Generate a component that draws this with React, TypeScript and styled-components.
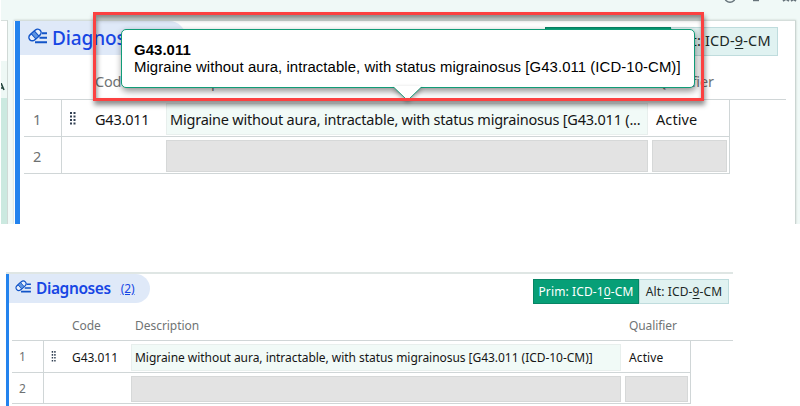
import React from "react";
import styled, { createGlobalStyle } from "styled-components";

const Global = createGlobalStyle`
  * { box-sizing: border-box; }
  body { margin: 0; background: #fff; font-family: "Noto Sans", "Open Sans", sans-serif; }
`;

const Page = styled.main`
  position: relative;
  width: 800px;
  height: 406px;
  overflow: hidden;
  background: #fff;
`;

const Workspace = styled.section`
  height: 224px;
  margin-left: 1px;
  padding-top: 20px;
  display: flex;
  background: #f0f9f7;
`;

const SideRail = styled.div`
  width: 7px;
  margin-right: 6px;
  border-right: 1px solid #d0d9d6;
  border-top: 1px solid #d6dfdc;
  background: linear-gradient(#fff 0 40px, #eef8f5 40px 77px, #cbe9e0 77px);
  overflow: hidden;
`;

const RailMark = styled.svg`
  display: block;
  width: 4px;
  height: 8px;
  margin-top: 62px;
`;

const Panel = styled.section<{ $small?: boolean }>`
  width: ${(p) => (p.$small ? 727 : 782)}px;
  height: ${(p) => (p.$small ? 134 : 204)}px;
  margin: ${(p) => (p.$small ? "48px 0 0 6px" : "0")};
  background: #fff;
  border-top: ${(p) => (p.$small ? "2px solid #dfe6e4" : "1px solid #d5dedb")};
  border-right: ${(p) => (p.$small ? "0" : "1px solid #cbd5d2")};
  box-shadow: ${(p) => (p.$small ? "none" : "0 0 2px #c3cdca")};
  clip-path: inset(-3px -3px 0 -3px);
  display: flex;
`;

const Stripe = styled.div<{ $small?: boolean }>`
  width: ${(p) => (p.$small ? 3 : 5)}px;
  margin-left: ${(p) => (p.$small ? 0 : 1)}px;
  flex: none;
  background: #2383ee;
`;

const Body = styled.div`
  flex: 1;
  min-width: 0;
`;

const Header = styled.header<{ $small?: boolean }>`
  height: ${(p) => (p.$small ? 37 : 41)}px;
  display: flex;
  justify-content: space-between;
  align-items: flex-start;
  padding-right: ${(p) => (p.$small ? 4 : 17)}px;
`;

const Title = styled.div<{ $small?: boolean }>`
  width: ${(p) => (p.$small ? 141 : 166)}px;
  height: ${(p) => (p.$small ? 29 : 34)}px;
  padding-left: ${(p) => (p.$small ? 6 : 8)}px;
  border-radius: ${(p) => (p.$small ? "0 15px 15px 0" : "0 18px 18px 0")};
  background: #dfe9f8;
  color: #1746e4;
  display: flex;
  align-items: center;
`;

const PillIcon = styled.svg<{ $small?: boolean }>`
  width: ${(p) => (p.$small ? 17 : 20)}px;
  height: ${(p) => (p.$small ? 14 : 17)}px;
  flex: none;
  margin: ${(p) => (p.$small ? "-4px 4px 0 0" : "-3px 4px 0 0")};
`;

const Text = styled.span<{ $size: number; $track?: number; $weight?: number }>`
  font-size: ${(p) => p.$size}px;
  letter-spacing: ${(p) => p.$track ?? 0}px;
  font-weight: ${(p) => p.$weight ?? 400};
  line-height: 1.3;
  white-space: nowrap;
`;

const Count = styled.span`
  margin-left: 10px;
  font-size: 12px;
  letter-spacing: -0.1px;
  text-decoration: underline;
`;

const Switcher = styled.div<{ $small?: boolean }>`
  display: flex;
  height: ${(p) => (p.$small ? 25 : 29)}px;
  margin-top: ${(p) => (p.$small ? 5 : 6)}px;
`;

const Choice = styled.button<{ $on?: boolean; $w: number }>`
  width: ${(p) => p.$w}px;
  height: 100%;
  padding: 0 0 2px;
  font-family: inherit;
  border: 1px solid ${(p) => (p.$on ? "#078565" : "#bfdcdd")};
  background: ${(p) => (p.$on ? "#079f77" : "#e0f2f1")};
  color: ${(p) => (p.$on ? "#fff" : "#1c2826")};
  u { text-underline-offset: 2px; }
`;

const Line = styled.div<{ $small?: boolean; $kind?: "head" }>`
  display: grid;
  grid-template-columns: ${(p) => (p.$small ? "31px 88px 494px 65px" : "37px 105px 486px 77px")};
  margin-left: ${(p) => (p.$small ? 3 : 4)}px;
  width: ${(p) => (p.$kind ? (p.$small ? 721 : 762) : p.$small ? 679 : 706)}px;
  height: ${(p) => (p.$kind ? (p.$small ? 30 : 38) : p.$small ? 31.5 : 37)}px;
  border-bottom: 1px solid #d0d6d7;
  border-right: ${(p) => (p.$kind ? 0 : 1)}px solid #d0d6d7;
  align-items: stretch;
  color: ${(p) => (p.$kind ? "#707475" : "#151515")};
`;

const Label = styled.div<{ $pad: number }>`
  padding-top: 1px;
  padding-left: ${(p) => p.$pad}px;
  display: flex;
  align-items: center;
`;

const Num = styled.div<{ $small?: boolean }>`
  display: flex;
  align-items: center;
  padding: 2px 0 0 ${(p) => (p.$small ? 7 : 9)}px;
  color: #6e7172;
`;

const CodeCell = styled.div`
  display: flex;
  align-items: center;
  padding-top: 3px;
  border-left: 1px solid #d0d6d7;
`;

const Grip = styled.svg<{ $small?: boolean }>`
  width: ${(p) => (p.$small ? 5 : 7)}px;
  height: ${(p) => (p.$small ? 11 : 13)}px;
  margin: ${(p) => (p.$small ? "-2px 16px 0 7px" : "-3px 19px 0 7px")};
  flex: none;
`;

const Field = styled.div<{ $tone?: "mint" | "gray"; $pad: number; $end?: boolean }>`
  display: flex;
  align-items: center;
  margin: 3px ${(p) => (p.$end ? 2 : 4)}px 1px 0;
  padding: 1px 0 0 ${(p) => p.$pad}px;
  border: 1px solid ${(p) => (p.$tone === "gray" ? "#d6d8d8" : p.$tone ? "#e8efed" : "transparent")};
  background: ${(p) => (p.$tone === "gray" ? "#e3e3e3" : p.$tone ? "#f1faf7" : "transparent")};
`;

const Toolbar = styled.svg`
  position: absolute;
  left: 720px;
  top: 0;
`;

const Callout = styled.div`
  position: absolute;
  left: 93px;
  top: 12px;
  width: 611px;
  height: 89px;
  border: 3px solid #fb4141;
  box-shadow: 1px 4px 5px rgba(0, 0, 0, 0.45), inset 1px 4px 5px rgba(0, 0, 0, 0.45);
`;

const Tip = styled.div`
  position: absolute;
  left: 121px;
  top: 29px;
  width: 574px;
  height: 59px;
  padding: 12px 0 0 12px;
  border: 1px solid #109c77;
  border-radius: 5px;
  background: #fff;
  box-shadow: 1px 3px 7px rgba(0, 0, 0, 0.45);
  font-family: "Liberation Sans", Arial, sans-serif;
  color: #000;
  display: flex;
  flex-direction: column;
`;

const TipText = styled.span<{ $bold?: boolean }>`
  font-size: 14.9px;
  letter-spacing: 0.08px;
  line-height: 17px;
  font-weight: ${(p) => (p.$bold ? 700 : 400)};
  white-space: nowrap;
`;

const Arrow = styled.svg`
  position: absolute;
  left: 392px;
  top: 86px;
  filter: drop-shadow(0 2px 2px rgba(0, 0, 0, 0.35));
`;

function Pill({ small }: { small?: boolean }) {
  return (
    <PillIcon $small={small} viewBox="0 0 20 17" fill="none" stroke="#1254c8" strokeWidth="1.5">
      <g transform="rotate(-42 7 7)">
        <rect x="0" y="3.6" width="14" height="6.8" rx="3.4" fill="#e9f1fc" />
        <path d="M5 3.6h4.2v6.8H5z" fill="#5f95e0" strokeWidth="1" />
      </g>
      <path d="M14 5.2h5M11.5 9.7h7.5M7 14.2h12" strokeWidth="2" />
    </PillIcon>
  );
}

function Handle({ small }: { small?: boolean }) {
  return (
    <Grip $small={small} viewBox="0 0 7 13" preserveAspectRatio="none" fill="#303f52">
      {[0, 3.5, 7, 10.5].map((y) => (
        <path key={y} d={`M1 ${y}h2v2h-2zM4.5 ${y}h2v2h-2z`} />
      ))}
    </Grip>
  );
}

const full = "Migraine without aura, intractable, with status migrainosus [G43.011 (ICD-10-CM)]";
const short = "Migraine without aura, intractable, with status migrainosus [G43.011 (...";

function Diagnoses({ small }: { small?: boolean }) {
  const size = small ? 12 : 14.5;
  const track = small ? -0.04 : -0.22;
  const T = ({ children, tr }: { children: React.ReactNode; tr?: number }) => (
    <Text $size={size} $track={tr ?? track}>{children}</Text>
  );
  const buttonTrack = small ? 0.12 : 0.15;
  return (
    <Panel $small={small}>
      <Stripe $small={small} />
      <Body>
        <Header $small={small}>
          <Title $small={small}>
            <Pill small={small} />
            <Text $size={small ? 15.5 : 19} $track={small ? -0.4 : -0.1} $weight={small ? 600 : 500}>Diagnoses</Text>
            {small && <Count>(2)</Count>}
          </Title>
          <Switcher $small={small}>
            <Choice $on $w={small ? 106 : 126}><T tr={buttonTrack}>Prim: ICD-1<u>0</u>-CM</T></Choice>
            <Choice $w={small ? 90 : 107}><T tr={buttonTrack}>Alt: ICD-<u>9</u>-CM</T></Choice>
          </Switcher>
        </Header>
        <Line $kind="head" $small={small}>
          <span />
          <Label $pad={small ? 29 : 34}><T>Code</T></Label>
          <Label $pad={4}><T>Description</T></Label>
          <Label $pad={4}><T tr={-0.1}>Qualifier</T></Label>
        </Line>
        <Line $small={small}>
          <Num $small={small}><T>1</T></Num>
          <CodeCell><Handle small={small} /><T>G43.011</T></CodeCell>
          <Field $tone="mint" $pad={3}><T>{small ? full : short}</T></Field>
          <Field $pad={3} $end><T tr={0.1}>Active</T></Field>
        </Line>
        <Line $small={small}>
          <Num $small={small}><T>2</T></Num>
          <CodeCell />
          <Field $tone="gray" $pad={0} />
          <Field $tone="gray" $pad={0} $end />
        </Line>
      </Body>
    </Panel>
  );
}

export default function App() {
  return (
    <Page>
      <Global />
      <Workspace>
        <SideRail>
          <RailMark viewBox="0 0 4 8"><path d="M0 0l3 7M0 5h2" stroke="#24443c" strokeWidth="1.6" /></RailMark>
        </SideRail>
        <Diagnoses />
      </Workspace>
      <Diagnoses small />
      <Toolbar width="80" height="5" fill="none" stroke="#66737a" strokeWidth="1.4">
        <circle cx="10" cy="-3" r="5.3" />
        <path d="M33 .5h6" />
        <path d="M63 1l3-2M66 -1l3 2M71 1l3-2M73 -1l3 2" strokeWidth="1.8" />
      </Toolbar>
      <Tip>
        <TipText $bold>G43.011</TipText>
        <TipText>{full}</TipText>
      </Tip>
      <Arrow width="30" height="18">
        <path d="M2 0H29V1.5L15.5 14.5 2 1.5z" fill="#fff" />
        <path d="M2 1.5L15.5 14.5 29 1.5" fill="none" stroke="#1a9a78" />
      </Arrow>
      <Callout />
    </Page>
  );
}
